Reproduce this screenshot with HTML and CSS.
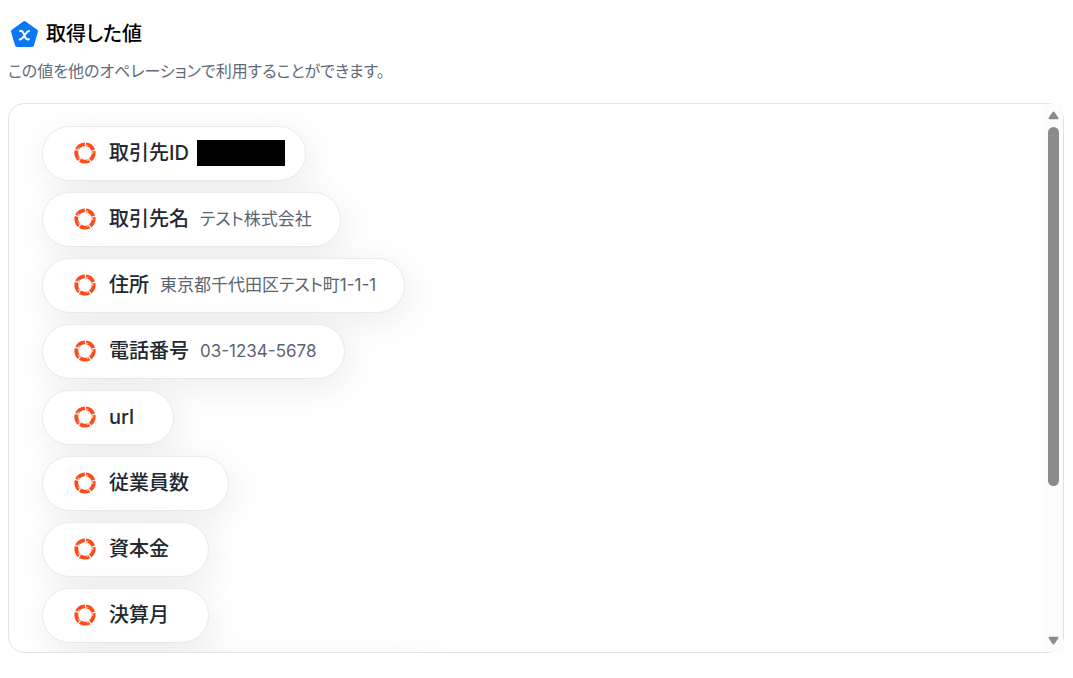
FILE: index.html
```html
<!DOCTYPE html>
<html lang="ja">

<head>
  <meta charset="UTF-8" />
  <meta name="viewport" content="width=device-width, initial-scale=1.0" />
  <title>取得した値</title>
  <link rel="stylesheet" href="styles.css">
</head>

<body>
  <svg class="defs" aria-hidden="true">
    <symbol id="ring" viewBox="0 0 22 22">
      <circle cx="11" cy="11" r="8.7" pathLength="100" fill="none" stroke="#ff4a17" stroke-width="3.8" stroke-dasharray="18 2" transform="rotate(-84 11 11)" />
      <circle cx="11" cy="11" r="7.6" pathLength="100" fill="none" stroke="#ffb09a" stroke-width="1.8" stroke-dasharray="5 15" transform="rotate(-84 11 11)" />
    </symbol>
  </svg>

  <header class="header">
    <h1 class="title">
      <svg class="title-icon" viewBox="0 0 28 28" aria-hidden="true">
        <path d="M14 3 L25 11 L21.2 24 H6.8 L3 11 Z" fill="#0a78f5" stroke="#0a78f5" stroke-width="4" stroke-linejoin="round" />
        <path d="M9.8 10.6 C11.8 10.2 12.4 11 13 12.6 L14.8 17 C15.6 18.8 16.6 19 18.2 18.6 M18.4 10.6 C16.8 10.8 15.8 12.2 14 14.8 C12.2 17.4 11.2 18.6 9.4 18.8" fill="none" stroke="#fff" stroke-width="2" stroke-linecap="round" />
      </svg>
      取得した値
    </h1>
    <p class="description">この値を他のオペレーションで利用することができます。</p>
  </header>

  <main class="panel">
    <ul class="values">
      <li class="value"><svg class="value-icon"><use href="#ring" /></svg><span class="value-name">取引先ID</span><span class="value-mask"></span></li>
      <li class="value"><svg class="value-icon"><use href="#ring" /></svg><span class="value-name">取引先名</span><span class="value-text">テスト株式会社</span></li>
      <li class="value"><svg class="value-icon"><use href="#ring" /></svg><span class="value-name">住所</span><span class="value-text">東京都千代田区テスト町1-1-1</span></li>
      <li class="value"><svg class="value-icon"><use href="#ring" /></svg><span class="value-name">電話番号</span><span class="value-text">03-1234-5678</span></li>
      <li class="value"><svg class="value-icon"><use href="#ring" /></svg><span class="value-name">url</span><span class="value-text"></span></li>
      <li class="value"><svg class="value-icon"><use href="#ring" /></svg><span class="value-name">従業員数</span><span class="value-text"></span></li>
      <li class="value"><svg class="value-icon"><use href="#ring" /></svg><span class="value-name">資本金</span><span class="value-text"></span></li>
      <li class="value"><svg class="value-icon"><use href="#ring" /></svg><span class="value-name">決算月</span><span class="value-text"></span></li>
      <li class="value value-long"></li>
    </ul>
    <div class="scrollbar" aria-hidden="true">
      <svg class="scroll-arrow" viewBox="0 0 10 8"><path d="M5 1.5 L8.5 6.5 H1.5 Z" /></svg>
      <div class="scroll-track">
        <div class="scroll-thumb"></div>
      </div>
      <svg class="scroll-arrow" viewBox="0 0 10 8"><path d="M5 6.5 L8.5 1.5 H1.5 Z" /></svg>
    </div>
  </main>
</body>

</html>
```

FILE: styles.css
```css
* {
  box-sizing: border-box;
}

body {
  margin: 0;
  padding: 18px 9px 24px 8px;
  background: #fff;
  color: #212830;
  font-family: Inter, "Noto Sans CJK JP", sans-serif;
  font-feature-settings: "palt";
}

.defs {
  display: none;
}

.header {
  margin-bottom: 21px;
}

.title {
  display: flex;
  align-items: center;
  gap: 7px;
  margin: 0 0 10px;
  padding-left: 2px;
  color: #000;
  font-size: 20px;
  font-weight: 500;
  line-height: 32px;
}

.title-icon {
  width: 29px;
  height: 29px;
}

.description {
  margin: 0;
  color: #5f6b7a;
  font-size: 16px;
  line-height: 22px;
}

.panel {
  display: flex;
  height: 550px;
  border: 1px solid #e2e2e2;
  border-radius: 16px;
}

.values {
  display: flex;
  flex: 1;
  flex-direction: column;
  align-items: flex-start;
  gap: 11px;
  margin: 0;
  padding: 22px 33px 0;
  overflow: hidden;
  border-radius: 16px 0 0 16px;
  list-style: none;
}

.value {
  display: flex;
  flex: none;
  align-items: center;
  height: 55px;
  padding: 0 28px 2px 31px;
  border: 1px solid #e8eaef;
  border-radius: 28px;
  background: #fff;
  box-shadow: 4px 8px 36px rgba(0, 0, 0, 0.08);
}

.value-long {
  width: 400px;
}

.value-icon {
  width: 22px;
  height: 22px;
  margin-right: 13px;
}

.value-name {
  margin-right: 11px;
  font-size: 20px;
  font-weight: 500;
  line-height: 28px;
}

.value-text {
  color: #5c6470;
  font-size: 17px;
  line-height: 24px;
}

.value-mask {
  width: 88px;
  height: 26px;
  margin: 0 -8px 0 -3px;
  background: #000;
}

/* scrollbar */
.scrollbar {
  display: flex;
  flex-direction: column;
  align-items: center;
  gap: 4px;
  width: 19px;
  padding: 7px 0;
  background: #fcfcfc;
}

.scroll-arrow {
  width: 11px;
  height: 9px;
  fill: #8b8b8b;
  stroke: #8b8b8b;
  stroke-width: 2;
  stroke-linejoin: round;
}

.scroll-track {
  flex: 1;
  width: 11px;
  padding-top: 3px;
}

.scroll-thumb {
  height: 71%;
  border-radius: 6px;
  background: #8b8b8b;
}
```
